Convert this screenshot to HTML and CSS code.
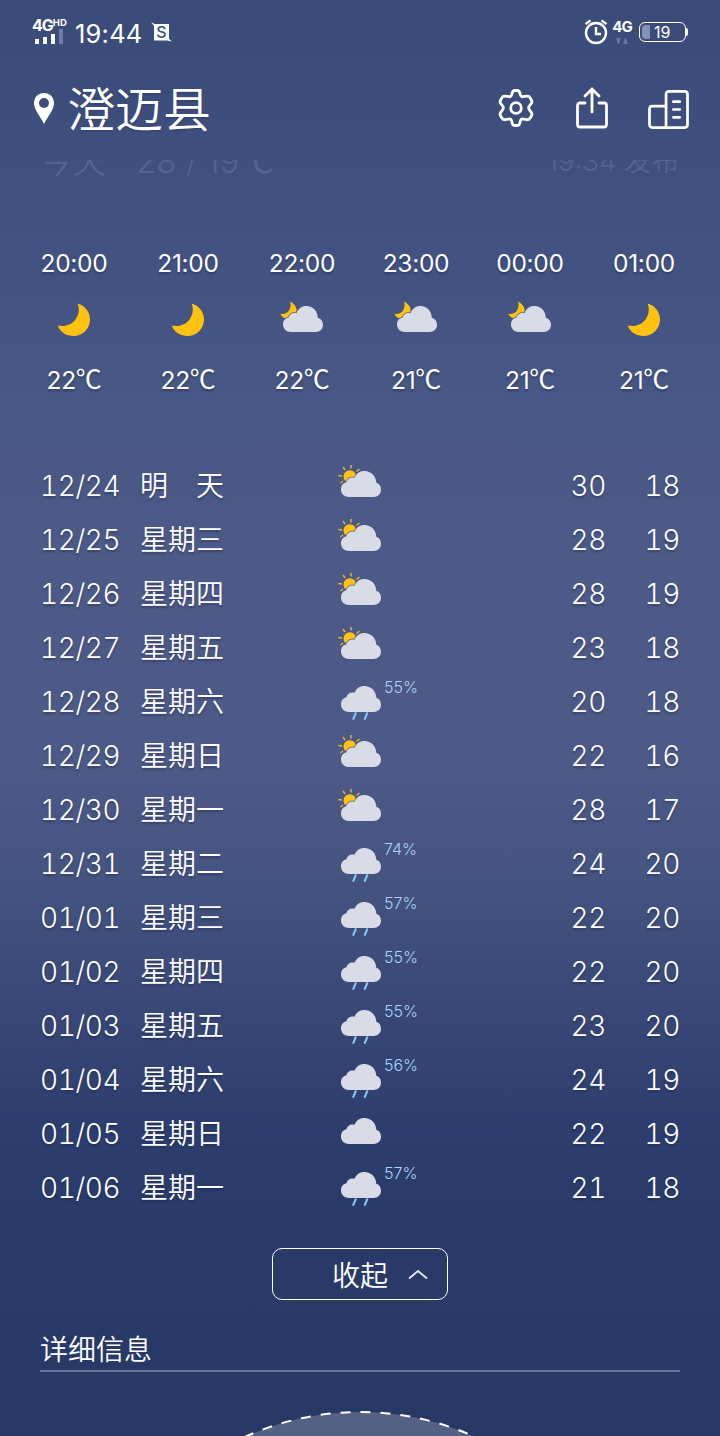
FILE: index.html
```html
<!DOCTYPE html>
<html lang="zh-CN">
<head>
<meta charset="utf-8">
<title>澄迈县</title>
<link rel="stylesheet" href="styles.css">
</head>
<body>
<svg class="defs" width="0" height="0">
  <symbol id="moon" viewBox="0 0 33 33"><path class="yellow" d="M20.500 .5C28 2.500 33 9 33 16.500C33 25.500 25.500 33 16.500 33C9.500 33 3 29 .7 22.500C8 24 14.500 22 18.500 16.500C22 11.500 22.800 6 20.500 .5Z"/></symbol>
  <symbol id="night" viewBox="0 0 44 34">
    <path class="yellow" d="M10 .5C15 3 17.500 7 16.500 12L9 18C5 18 2 16.500 .3 12.800C4 13.500 7.500 12 9 9.500C10.800 6.500 11 3.500 10 .5Z"/>
    <g class="cloud outlined"><path d="M11 31C6.500 31 3 28 3 23.500C3 19 6 17.200 8.500 16.800C9 13.500 12.500 11.200 16.500 12.200C18.200 7.700 21.500 5 26.500 5C33 5 37.500 10 37.800 16.800C41 17.700 43 20.500 43 23.800C43 28 39.700 31 35.500 31Z"/></g>
  </symbol>
  <symbol id="sun" viewBox="0 0 44 34">
    <g class="rays"><path d="M13 0V3.500M5 2L7 5M21.500 4L18.500 6.500M.3 10.500L4 11M2.500 18L5 16"/></g>
    <circle class="yellow" cx="11.800" cy="11.500" r="6.300"/>
    <g class="cloud outlined"><path d="M11 32C6.500 32 3 29 3 24.500C3 20 6 17.700 8.500 17.300C9 14 12.500 11.700 16.500 12.700C18.200 8.700 21.500 6 26.500 6C33 6 38 11 38.300 17.800C41.500 18.700 43 21.500 43 24.800C43 29 39.700 32 35.500 32Z"/></g>
  </symbol>
  <symbol id="rain" viewBox="0 0 44 34">
    <g class="cloud"><path d="M11 26C6.500 26 3 23 3 18.500C3 14 6 11.700 8.500 11.300C9 8 12.500 5.700 16.500 6.700C18.200 2.700 21.500 0 26.500 0C33 0 38 5 38.300 11.800C41.500 12.700 43 15.500 43 18.800C43 23 39.700 26 35.500 26Z"/></g>
    <g class="drops"><path d="M18 26.500L15 33.700M29.500 26.500L26.500 33.700"/></g>
  </symbol>
  <symbol id="overcast" viewBox="0 0 44 34">
    <g class="cloud"><path d="M11 26C6.500 26 3 23 3 18.500C3 14 6 11.700 8.500 11.300C9 8 12.500 5.700 16.500 6.700C18.200 2.700 21.500 0 26.500 0C33 0 38 5 38.300 11.800C41.500 12.700 43 15.500 43 18.800C43 23 39.700 26 35.500 26Z"/></g>
  </symbol>
</svg>
<div class="app">
  <div class="status">
    <div class="signal">
      <div class="net">4G<span class="hd">HD</span></div>
      <svg width="32" height="17" viewBox="0 0 32 17"><path fill="#fff" d="M3 11h4v5H3zM11 9h4v7h-4zM19 6h4v10h-4z"/><path fill="#6c7baa" d="M27 1h4v15h-4z"/></svg>
    </div>
    <span class="clock">19:44</span>
    <svg class="shot" width="22" height="22" viewBox="0 0 22 22"><path fill="#fff" d="M1 1L4.500 3H19V17.500L21.500 20.500L17 19.500H4V5Z"/><text class="shot-s" x="11.500" y="17" text-anchor="middle">S</text></svg>
    <span class="grow"></span>
    <svg class="alarm" width="24" height="26" viewBox="0 0 24 26" fill="none" stroke="#fff" stroke-width="2.400"><circle cx="12" cy="14" r="10"/><path d="M12 8v7h5"/><path stroke-width="2.200" d="M1.500 5L6.500 1.500M17.500 1.500L22.500 5"/></svg>
    <div class="lte"><span>4G</span><svg width="14" height="8" viewBox="0 0 14 8" fill="#6877a2"><path d="M1 1h5L4 7H3zM8 7h5L11 1h-1z"/></svg></div>
    <div class="battery"><i class="charge"></i><span>19</span></div>
    <i class="tip"></i>
  </div>

  <header class="header">
    <svg class="pin" width="20" height="31" viewBox="0 0 20 31"><path fill="#fff" fill-rule="evenodd" d="M10 0C4.300 0 0 4.300 0 10C0 16.500 6 23 10 31C14 23 20 16.500 20 10C20 4.300 15.700 0 10 0ZM10 5A5 5 0 1 1 10 15A5 5 0 1 1 10 5Z"/></svg>
    <h1 class="city">澄迈县</h1>
    <div class="actions">
      <svg width="36" height="38" viewBox="0 0 36 38" class="line gear"><path d="M14.300 3.500Q15 1.500 17 1.500H19Q21 1.500 21.700 3.500L22.500 6.200Q23.200 8 25 7.700L28.500 7.200Q31 6.800 32 8.700L33.500 11.200Q34.500 13 33.200 14.600L31.300 17Q30 18.800 31.300 20.700L33.200 23.200Q34.500 25 33.500 26.800L32 29.300Q31 31 28.500 30.700L25 30Q23.200 29.700 22.500 31.500L21.700 34.300Q21 36.500 19 36.500H17Q15 36.500 14.300 34.300L13.500 31.500Q12.800 29.700 11 30L7.500 30.700Q5 31 4 29.300L2.500 26.800Q1.500 25 2.800 23.200L4.700 20.700Q6 18.800 4.700 17L2.800 14.600Q1.500 13 2.500 11.200L4 8.700Q5 6.800 7.500 7.200L11 7.700Q12.800 8 13.500 6.200Z"/><circle cx="18" cy="19" r="5.300"/></svg>
      <svg width="32" height="42" viewBox="0 0 32 42" class="line"><path d="M9 16H4Q1.500 16 1.500 18.500V37.500Q1.500 40 4 40H28Q30.500 40 30.500 37.500V18.500Q30.500 16 28 16H23M16 25V2M9 9L16 2L23 9"/></svg>
      <svg width="41" height="39" viewBox="0 0 42 40" class="line building"><path d="M18.500 38.500V4.500Q18.500 1.500 21.500 1.500H37.500Q40.500 1.500 40.500 4.500V35.500Q40.500 38.500 37.500 38.500H4.500Q1.500 38.500 1.500 35.500V19.500Q1.500 16.500 4.500 16.500H18.500M26 12h6.500M26 20h6.500M26 28h6.500"/></svg>
    </div>
  </header>

  <div class="today"><div class="today-row"><span class="t-day">今天</span><span class="t-temp">28 / 19<b class="c">℃</b></span><span class="t-pub">19:34 发布</span></div></div>

  <section class="hours">
    <div class="hour"><span>20:00</span><svg class="moon"><use href="#moon"/></svg><span class="deg">22<b class="c">℃</b></span></div>
    <div class="hour"><span>21:00</span><svg class="moon"><use href="#moon"/></svg><span class="deg">22<b class="c">℃</b></span></div>
    <div class="hour"><span>22:00</span><svg class="wx"><use href="#night"/></svg><span class="deg">22<b class="c">℃</b></span></div>
    <div class="hour"><span>23:00</span><svg class="wx"><use href="#night"/></svg><span class="deg">21<b class="c">℃</b></span></div>
    <div class="hour"><span>00:00</span><svg class="wx"><use href="#night"/></svg><span class="deg">21<b class="c">℃</b></span></div>
    <div class="hour"><span>01:00</span><svg class="moon"><use href="#moon"/></svg><span class="deg">21<b class="c">℃</b></span></div>
  </section>

  <section class="days">
    <div class="day"><span class="date">12/24</span><span class="name">明　天</span><svg class="wx"><use href="#sun"/></svg><span class="pop"></span><span class="num">30</span><span class="num">18</span></div>
    <div class="day"><span class="date">12/25</span><span class="name">星期三</span><svg class="wx"><use href="#sun"/></svg><span class="pop"></span><span class="num">28</span><span class="num">19</span></div>
    <div class="day"><span class="date">12/26</span><span class="name">星期四</span><svg class="wx"><use href="#sun"/></svg><span class="pop"></span><span class="num">28</span><span class="num">19</span></div>
    <div class="day"><span class="date">12/27</span><span class="name">星期五</span><svg class="wx"><use href="#sun"/></svg><span class="pop"></span><span class="num">23</span><span class="num">18</span></div>
    <div class="day"><span class="date">12/28</span><span class="name">星期六</span><svg class="wx low"><use href="#rain"/></svg><span class="pop">55%</span><span class="num">20</span><span class="num">18</span></div>
    <div class="day"><span class="date">12/29</span><span class="name">星期日</span><svg class="wx"><use href="#sun"/></svg><span class="pop"></span><span class="num">22</span><span class="num">16</span></div>
    <div class="day"><span class="date">12/30</span><span class="name">星期一</span><svg class="wx"><use href="#sun"/></svg><span class="pop"></span><span class="num">28</span><span class="num">17</span></div>
    <div class="day"><span class="date">12/31</span><span class="name">星期二</span><svg class="wx low"><use href="#rain"/></svg><span class="pop">74%</span><span class="num">24</span><span class="num">20</span></div>
    <div class="day"><span class="date">01/01</span><span class="name">星期三</span><svg class="wx low"><use href="#rain"/></svg><span class="pop">57%</span><span class="num">22</span><span class="num">20</span></div>
    <div class="day"><span class="date">01/02</span><span class="name">星期四</span><svg class="wx low"><use href="#rain"/></svg><span class="pop">55%</span><span class="num">22</span><span class="num">20</span></div>
    <div class="day"><span class="date">01/03</span><span class="name">星期五</span><svg class="wx low"><use href="#rain"/></svg><span class="pop">55%</span><span class="num">23</span><span class="num">20</span></div>
    <div class="day"><span class="date">01/04</span><span class="name">星期六</span><svg class="wx low"><use href="#rain"/></svg><span class="pop">56%</span><span class="num">24</span><span class="num">19</span></div>
    <div class="day"><span class="date">01/05</span><span class="name">星期日</span><svg class="wx low"><use href="#overcast"/></svg><span class="pop"></span><span class="num">22</span><span class="num">19</span></div>
    <div class="day"><span class="date">01/06</span><span class="name">星期一</span><svg class="wx low"><use href="#rain"/></svg><span class="pop">57%</span><span class="num">21</span><span class="num">18</span></div>
  </section>

  <button class="collapse"><span>收起</span><svg width="20" height="11" viewBox="0 0 20 11" fill="none" stroke="#e4e8f2" stroke-width="1.900"><path d="M1 9.500L10 2L19 9.500"/></svg></button>
  <h2 class="details">详细信息</h2>
  <svg class="arc" width="720" height="26" viewBox="0 0 720 26"><circle cx="360" cy="280" r="278" fill="#556184"/><path d="M82 280A278 278 0 0 1 638 280" fill="none" stroke="#fff" stroke-width="2" stroke-dasharray="10 10" stroke-dashoffset="3"/></svg>
</div>
</body>
</html>
```
FILE: styles.css
```css
* { box-sizing: border-box; }
body { margin: 0; }
.defs { position: absolute; }
.app {
  width: 720px;
  height: 1436px;
  overflow: hidden;
  display: flex;
  flex-direction: column;
  color: #fff;
  font-family: Inter, "Noto Sans CJK SC", sans-serif;
  background: linear-gradient(#3b4b78 0, #40507f 190px, #485784 400px, #4d5986 540px, #4d5986 760px, #465481 870px, #3a4877 1000px, #2d3d6d 1130px, #293a69 1250px, #283865 1436px);
}
.status { height: 64px; padding: 0 32px; display: flex; align-items: center; flex: none; }
.signal { width: 34px; height: 32px; margin-right: 9px; }
.net { height: 15px; font-size: 16px; line-height: 14px; font-weight: 700; letter-spacing: -1px; white-space: nowrap; }
.signal svg { display: block; margin-top: -3px; }
.hd { font-size: 9.500px; vertical-align: 5px; letter-spacing: 0; }
.clock { font-size: 25.500px; width: 75px; letter-spacing: .2px; padding-top: 3px; white-space: nowrap; }
.shot-s { font: 500 16px Inter, sans-serif; fill: #3c4b79; }
.grow { flex: 1; }
.alarm { margin-right: 3px; }
.lte { width: 22px; height: 26px; display: flex; flex-direction: column; align-items: center; font-size: 15px; line-height: 15px; font-weight: 700; letter-spacing: -1px; margin-right: 5px; gap: 3px; }
.battery { width: 47px; height: 20px; border: 1.500px solid #fff; border-radius: 6px; display: flex; align-items: center; font-size: 16px; padding-left: 2px; gap: 4px; font-weight: 400; margin-left: 1px; }
.charge { width: 8px; height: 14px; background: #8590b3; border-radius: 4px 1px 1px 4px; }
.tip { width: 2px; height: 8px; background: #fff; border-radius: 0 2px 2px 0; }
.header { height: 96px; padding: 0 31px 8px 34px; display: flex; align-items: center; flex: none; }
.city { margin: 0 0 0 13px; font-size: 48px; font-weight: 350; line-height: 60px; padding-top: 3px; text-shadow: 0 1px 2px rgba(20, 30, 70, .35); }
.actions { margin-left: auto; display: flex; align-items: center; gap: 40px; }
.gear { margin-right: 2px; }
.building { margin-top: 2px; }
.line { fill: none; stroke: #fff; stroke-width: 2.800; stroke-linecap: round; stroke-linejoin: round; }
.today { height: 20px; overflow: hidden; flex: none; }
.today-row { display: flex; margin-top: -17px; padding: 0 41px 0 40px; height: 36px; line-height: 36px; font-size: 33px; font-weight: 350; color: #54638f; white-space: nowrap; }
.t-day { width: 96px; }
.t-pub { margin-left: auto; font-size: 27.500px; }
.c { font-family: "Noto Sans CJK SC", sans-serif; font-weight: inherit; line-height: 0; font-size: 1.060em; }
.hours { margin-top: 67px; height: 153px; padding: 0 17px; display: grid; grid-template-columns: repeat(6, 114px); flex: none; }
.hour { display: flex; flex-direction: column; align-items: center; font-size: 24.500px; letter-spacing: -.3px; line-height: 32px; text-shadow: 0 2px 2px rgba(20, 30, 70, .4); }
.hour .moon { width: 33px; height: 33px; margin: 24px 1px 28px 0; }
.hour .wx { margin: 22px 0 29px; }
.wx { width: 44px; height: 34px; display: block; }
.low { transform: translateY(5px); }
.yellow { fill: #ffc20e; }
.cloud { fill: #d9dce7; }
.outlined { stroke: #4a5885; stroke-width: 1.500; paint-order: stroke; }
.rays { stroke: #dfb43c; stroke-width: 1.500; }
.drops { stroke: #83cdf5; stroke-width: 2; }
.days { margin-top: 59px; padding: 0 40px; flex: none; }
.day { height: 54px; display: grid; grid-template-columns: 100px 198px 45px 107px 116px 74px; align-items: center; font-size: 28px; font-weight: 350; text-shadow: 0 2px 2px rgba(15, 25, 60, .35); }
.date, .num { font-feature-settings: "tnum"; font-weight: 350; letter-spacing: -.4px; }
.num { text-align: right; }
.name { font-size: 28px; line-height: 40px; }
.day .wx { margin-top: -8px; }
.pop { font-size: 16px; color: #a9d6fa; align-self: start; padding: 2px 0 0 1px; line-height: 20px; font-weight: 350; text-shadow: none; }
.collapse { width: 176px; height: 52px; margin: 33px auto 0; flex: none; border: 1.500px solid #fff; border-radius: 10px; background: none; color: #fff; font: 350 28px "Noto Sans CJK SC", sans-serif; line-height: 40px; display: flex; align-items: center; gap: 20px; padding: 0 0 0 59px; }
.details { margin: 28px 40px 0; padding-top: 1px; height: 44px; flex: none; border-bottom: 2px solid #66729a; font-size: 28px; line-height: 42px; font-weight: 350; }
.arc { margin-top: 38px; flex: none; display: block; }
```
